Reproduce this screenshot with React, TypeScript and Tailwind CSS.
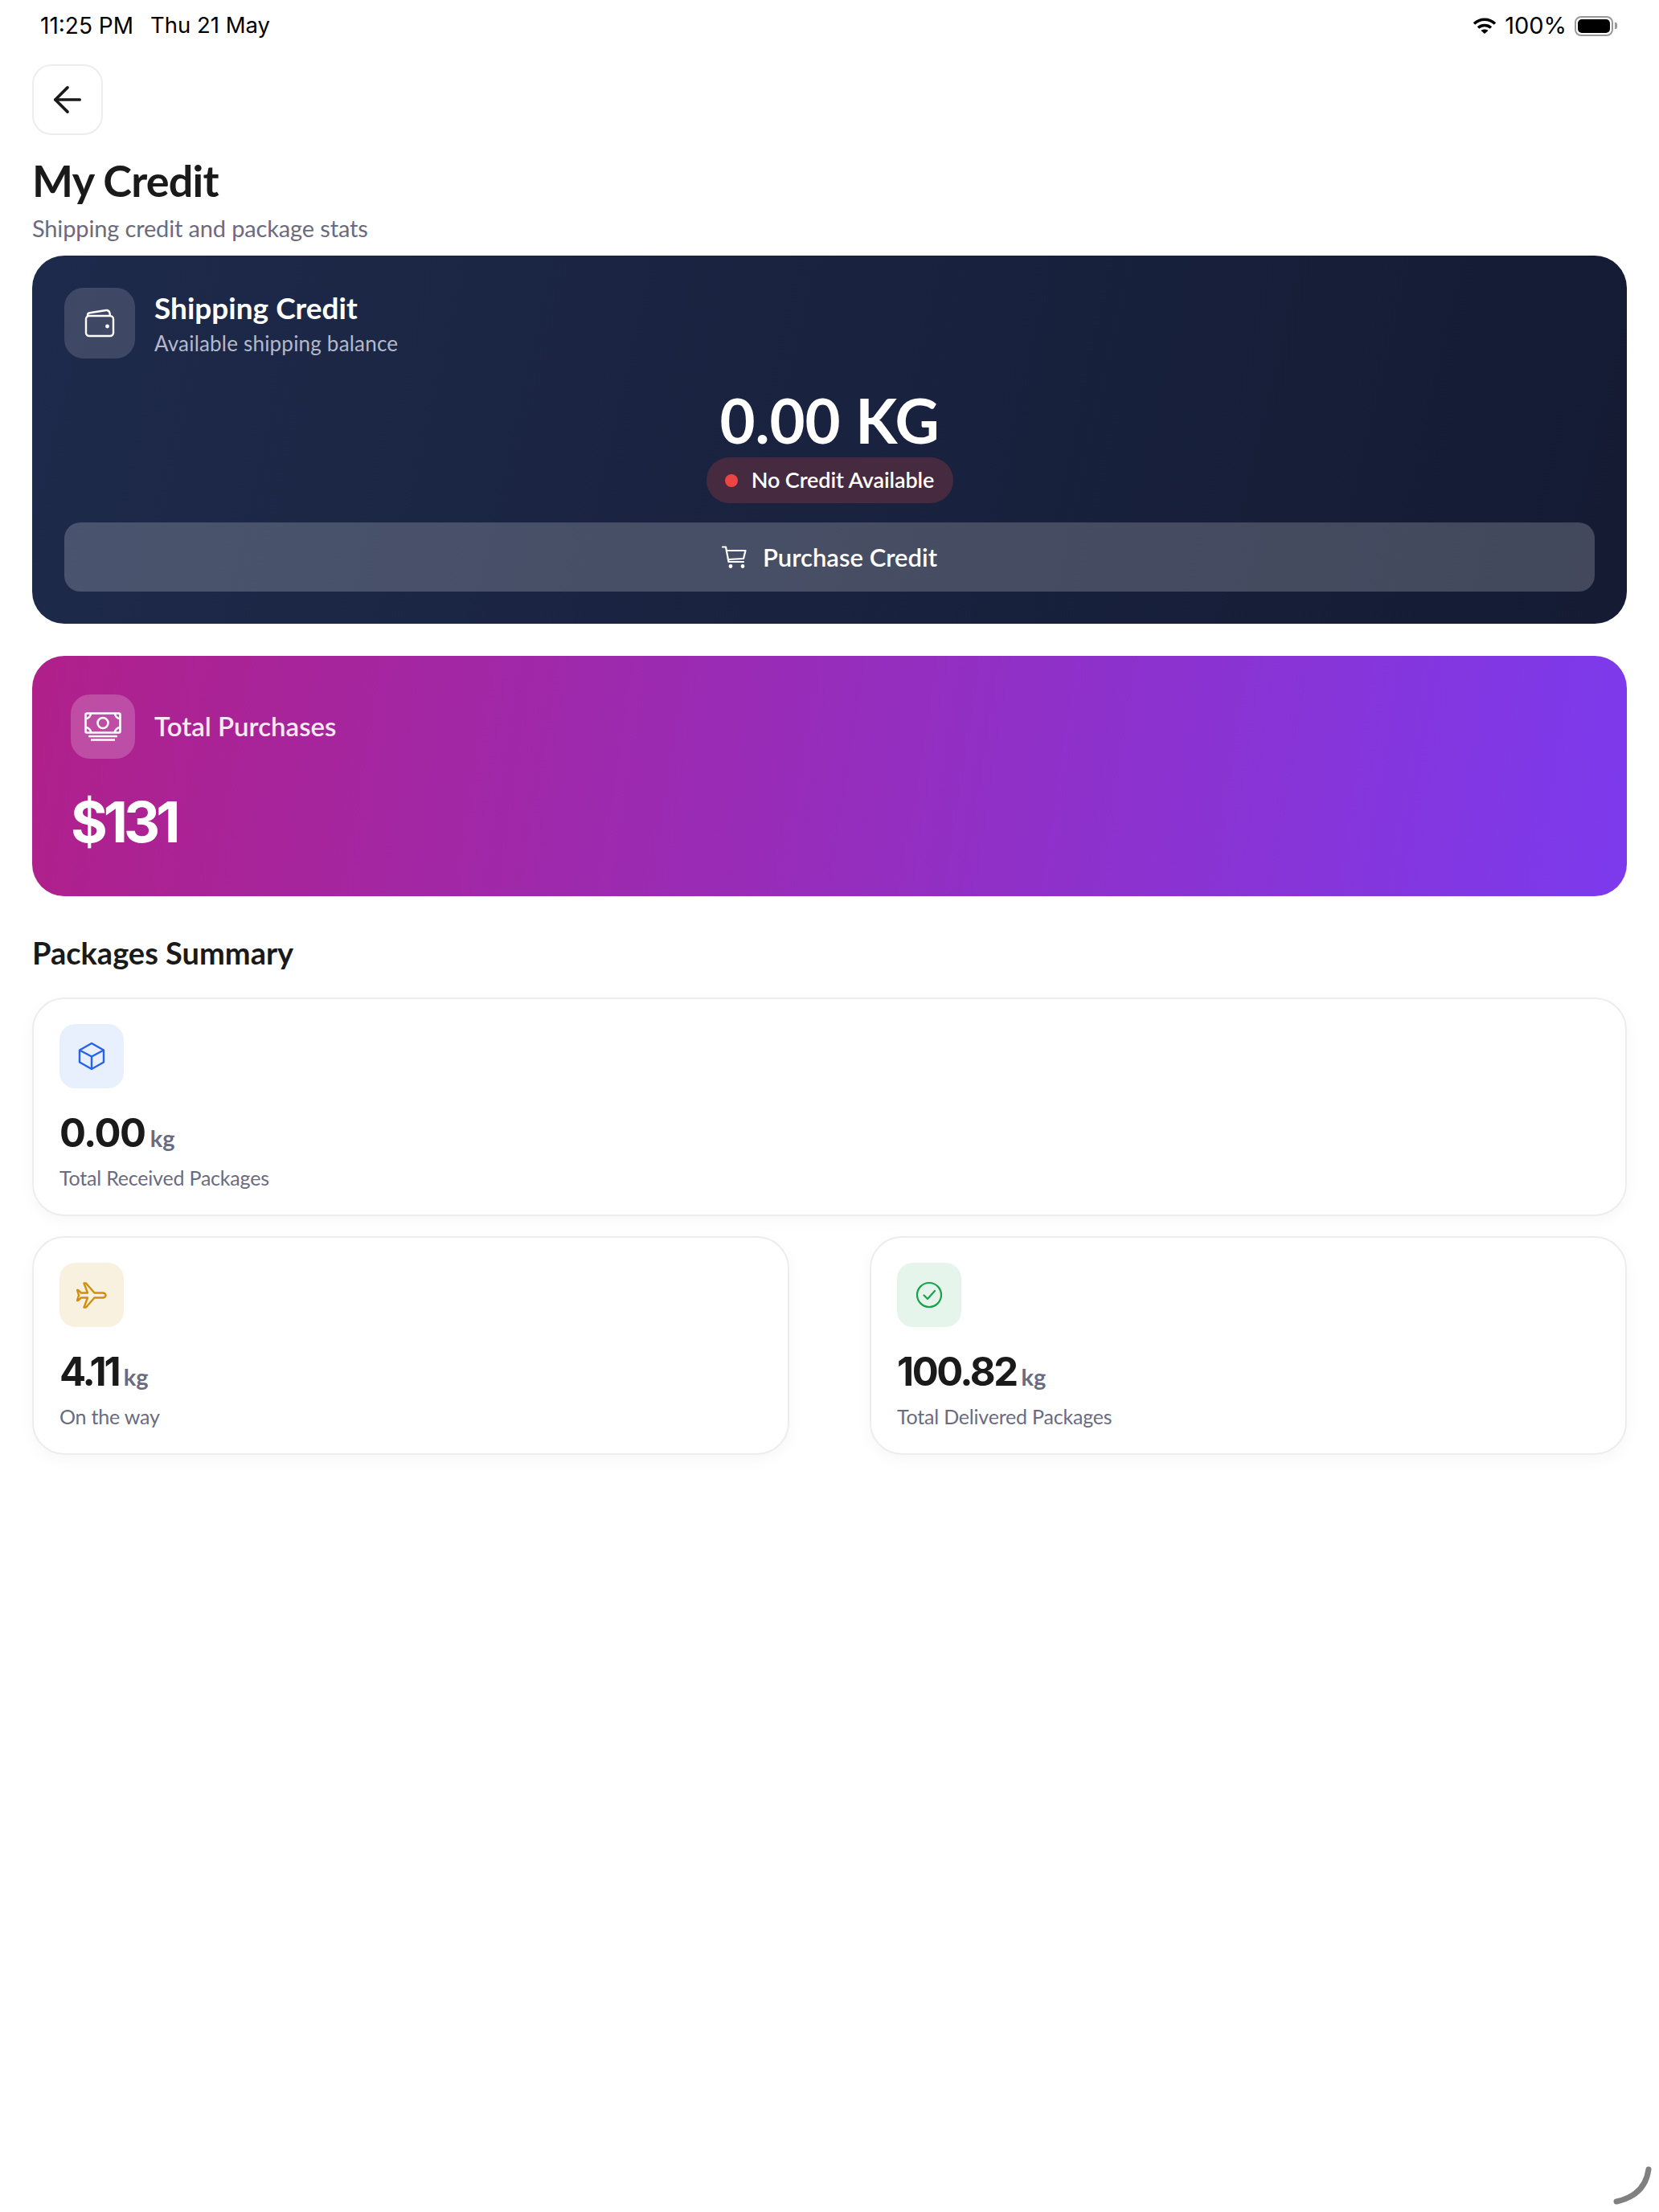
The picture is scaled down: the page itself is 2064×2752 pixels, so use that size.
import { ArrowLeft } from "lucide-react";

function StatCard({ icon, box, value, label, valueClass }: { icon: React.ReactNode; box: string; value: string; label: string; valueClass?: string }) {
  return (
    <div className="flex-1 h-[272px] rounded-[40px] border-2 border-[#ededed] bg-white px-[32px] pt-[31px] shadow-[0_6px_20px_rgba(0,0,0,0.035)]">
      <div className={`w-[80px] h-[80px] rounded-[20px] flex items-center justify-center ${box}`}>{icon}</div>
      <div className="mt-[26px] flex items-baseline h-[60px]">
        <span className={`font-['Inter',sans-serif] text-[49px] leading-[60px] font-bold text-[#1a1a1a] ${valueClass ?? ""}`}>{value}</span>
        <span className="ml-[6px] text-[29px] font-bold text-[#6b6b80]">kg</span>
      </div>
      <div className="mt-[8px] text-[25px] leading-[34px] text-[#6b6b80] tracking-[-0.2px]">{label}</div>
    </div>
  );
}

export default function App() {
  return (
    <div className="relative min-h-[2752px] bg-white font-['Lato',sans-serif] overflow-hidden">
      {/* Status bar */}
      <div className="h-[64px] pl-[50px] pr-[52px] flex items-center justify-between font-['Inter',sans-serif] text-[28px] text-black">
        <div className="flex gap-[21px]">
          <span>11:25 PM</span>
          <span className="text-[27.5px]">Thu 21 May</span>
        </div>
        <div className="flex items-center">
          <svg width="30" height="22" viewBox="0 0 30 22" fill="none" stroke="black" strokeWidth="3.6">
            <path d="M2 8.5C9.5 1.5 20.5 1.5 28 8.5" />
            <path d="M7 13.5C11.5 9.5 18.5 9.5 23 13.5" />
            <path d="M15 21L10.5 17C13 15 17 15 19.5 17Z" fill="black" stroke="none" />
          </svg>
          <span className="ml-[10px] text-[29px]">100%</span>
          <div className="ml-[10px] w-[48px] h-[25px] rounded-[8px] border-2 border-[#999999] p-[2px]">
            <div className="w-full h-full rounded-[5px] bg-black" />
          </div>
          <div className="ml-[2px] w-[3px] h-[8px] rounded-r-[2px] bg-[#999999]" />
        </div>
      </div>

      <div className="px-[40px]">
        <div className="mt-[16px] w-[88px] h-[88px] rounded-[24px] border-2 border-[#ededed] flex items-center justify-center">
          <ArrowLeft size={52} strokeWidth={1.7} className="text-[#1a1a1a]" />
        </div>
        <h1 className="mt-[22px] text-[54px] leading-[70px] font-bold text-[#1a1a1a] tracking-[-0.8px]">My Credit</h1>
        <p className="mt-[4px] text-[29px] leading-[40px] text-[#6b6b80] tracking-[-0.15px]">Shipping credit and package stats</p>

        {/* Shipping credit */}
        <div className="mt-[14px] h-[458px] rounded-[40px] bg-[linear-gradient(103deg,#1e2a4b,#141b33)] px-[40px] pt-[40px]">
          <div className="flex items-center">
            <div className="w-[88px] h-[88px] rounded-[24px] bg-white/15 flex items-center justify-center">
              <svg width="38" height="36" viewBox="0 0 38 36" fill="none" stroke="white" strokeWidth="2.4" strokeLinejoin="round">
                <rect x="2" y="9" width="34" height="25" rx="4" />
                <path d="M4 9V8C4 6.5 5 5.5 6.5 5.2L27 2C29.5 1.7 31 3 31.5 5.5L32 9" />
                <circle cx="28.5" cy="22" r="2.4" fill="white" stroke="none" />
              </svg>
            </div>
            <div className="ml-[24px]">
              <div className="text-[37px] leading-[48px] font-bold text-white">Shipping Credit</div>
              <div className="mt-[2px] text-[26px] leading-[36px] text-[#b4b9c9] tracking-[0.2px]">Available shipping balance</div>
            </div>
          </div>
          <div className="mt-[37px] flex flex-col items-center">
            <div className="text-[76px] leading-[80px] font-bold text-white">0.00 KG</div>
            <div className="mt-[6px] w-[307px] h-[57px] rounded-full bg-[#462a3f] flex items-center justify-center gap-[17px]">
              <span className="w-[16px] h-[16px] rounded-full bg-[#ef4444]" />
              <span className="text-[27px] font-semibold text-white tracking-[-0.1px]">No Credit Available</span>
            </div>
          </div>
          <div className="mt-[24px] h-[86px] rounded-[20px] bg-white/20 flex items-center justify-center gap-[20px]">
            <svg width="31" height="28" viewBox="0 0 31 28" fill="none" stroke="white" strokeWidth="2.2" strokeLinecap="round" strokeLinejoin="round">
              <path d="M1 1.5H5L8.5 20H27" />
              <path d="M6 6H29.5L27 16L8 17" />
              <circle cx="11" cy="25.5" r="1.3" fill="white" />
              <circle cx="26" cy="25.5" r="1.3" fill="white" />
            </svg>
            <span className="text-[31px] font-semibold text-white">Purchase Credit</span>
          </div>
        </div>

        {/* Total purchases */}
        <div className="mt-[40px] h-[299px] rounded-[40px] bg-[linear-gradient(99deg,#b0208a,#7c3aed)] pl-[48px] pt-[48px]">
          <div className="flex items-center">
            <div className="w-[80px] h-[80px] rounded-[24px] bg-white/20 flex items-center justify-center">
              <svg width="46" height="36" viewBox="0 0 46 36" fill="none" stroke="white" strokeWidth="2.6">
                <rect x="1.5" y="1.5" width="43" height="24" rx="1.5" />
                <circle cx="23" cy="13.5" r="6.5" />
                <path d="M1.5 8C5 8 8 5 8 1.5M38 1.5C38 5 41 8 44.5 8M1.5 19C5 19 8 22 8 25.5M38 25.5C38 22 41 19 44.5 19" />
                <path d="M5 30H41M8 34.5H38" />
              </svg>
            </div>
            <span className="ml-[24px] text-[33px] font-semibold text-white/90">Total Purchases</span>
          </div>
          <div className="mt-[35px] font-['Inter',sans-serif] text-[70px] leading-[88px] font-bold text-white tracking-[-5px]">$131</div>
        </div>

        <h2 className="mt-[48px] text-[38px] leading-[44px] font-bold text-[#1a1a1a]">Packages Summary</h2>

        <div className="mt-[34px] flex flex-col gap-[25px]">
          <div className="flex">
            <StatCard
              box="bg-[#e8effd]"
              value="0.00"
              valueClass="tracking-[-1.5px]"
              label="Total Received Packages"
              icon={
                <svg width="34" height="36" viewBox="0 0 34 36" fill="none" stroke="#2563eb" strokeWidth="2.4" strokeLinejoin="round">
                  <path d="M17 2L32 10.5V25.5L17 34L2 25.5V10.5Z" />
                  <path d="M2 10.5L17 18.5L32 10.5M17 18.5V34" />
                </svg>
              }
            />
          </div>
          <div className="flex gap-[100px]">
            <StatCard
              box="bg-[#f9f1e0]"
              value="4.11"
              valueClass="tracking-[-3px]"
              label="On the way"
              icon={
                <svg width="38" height="33" viewBox="0 0 38 33" fill="none" stroke="#d18f0b" strokeWidth="2.4" strokeLinejoin="round">
                  <path d="M33 13.5H22.5L12 1.5H9.5L14 13.5H6L2 10H1L3 16.5L1 23H2L6 19.5H14L9.5 31.5H12L22.5 19.5H33C35 19.5 36.5 18 36.5 16.5C36.5 15 35 13.5 33 13.5Z" />
                </svg>
              }
            />
            <StatCard
              box="bg-[#e6f5ec]"
              value="100.82"
              valueClass="tracking-[-2.5px]"
              label="Total Delivered Packages"
              icon={
                <svg width="34" height="34" viewBox="0 0 34 34" fill="none" stroke="#16a34a" strokeWidth="2.2" strokeLinecap="round" strokeLinejoin="round">
                  <circle cx="17" cy="17" r="15" />
                  <path d="M10.5 17.5L15 22L24 12" />
                </svg>
              }
            />
          </div>
        </div>
      </div>

      {/* Home indicator corner */}
      <svg className="absolute right-0 bottom-0" width="64" height="64" viewBox="0 0 64 64" fill="none" stroke="#808080" strokeWidth="7" strokeLinecap="round">
        <path d="M51 11C48 33 34 46 11 51" />
      </svg>
    </div>
  );
}
